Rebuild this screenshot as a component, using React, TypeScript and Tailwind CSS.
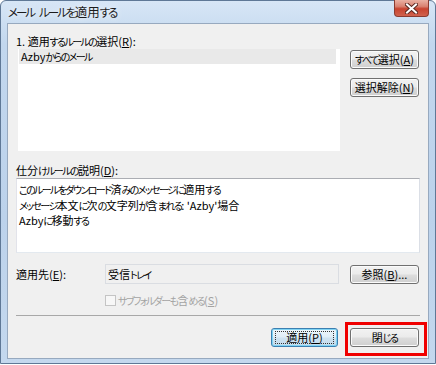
const jp = "font-['Noto_Sans_CJK_JP','Noto_Sans_CJK_SC',sans-serif] [font-feature-settings:'palt'_1]";

// kana runs are set tighter than kanji, like the dialog's UI font
function J({ t, k = "text-[10px] tracking-[-1.6px]" }: { t: string; k?: string }) {
  const parts = t.split(/([\u3040-\u30ff]+)/);
  return (
    <>
      {parts.map((p, i) =>
        i % 2 ? (
          <span key={i} className={k}>
            {p}
          </span>
        ) : (
          p
        )
      )}
    </>
  );
}

function Btn({ label, mn, rest, width }: { label: string; mn: string; rest?: string; width: string }) {
  return (
    <div
      className={`${width} flex h-[19px] items-center justify-center rounded-[3px] border border-[#707070] bg-[linear-gradient(#f2f2f2_0%,#ebebeb_48%,#dddddd_52%,#cfcfcf_100%)] text-[11px] leading-none text-black shadow-[inset_0_0_0_1px_#fbfbfb]`}
    >
      <span>
        <J t={label} />(<u>{mn}</u>){rest}
      </span>
    </div>
  );
}

export default function App() {
  return (
    <div className={`h-[365px] w-[436px] overflow-hidden bg-white ${jp}`}>
      {/* window frame */}
      <div className="flex h-[364px] w-[436px] flex-col rounded-t-[6px] border border-[#5f7896] bg-[linear-gradient(#d7e6f6,#c2d7ee_12%,#bcd2eb_60%,#c4d8ee)] px-[6px] pb-[4px]">
        {/* title bar */}
        <div className="flex h-[22px] items-start justify-between">
          <div className="flex gap-[5px] pl-[1px] pt-[3px] text-[12.5px] leading-[16px] text-[#1b1b1b] [text-shadow:0_0_6px_#ffffff]">
            <span>
              <J t="メール" k="text-[11.5px] tracking-[-2px]" />
            </span>
            <span>
              <J t="ルールを適用する" k="text-[11.5px] tracking-[-2px]" />
            </span>
          </div>
          <div className="-mt-px flex h-[17px] w-[35px] items-center justify-center rounded-b-[4px] border border-t-0 border-[#8a3b30] bg-[linear-gradient(#eab1a3,#d98271_40%,#c8432f_55%,#d0624e_100%)]">
            <svg width="13" height="11" viewBox="0 0 13 11">
              <path d="M2 1.5 L11 9.5 M11 1.5 L2 9.5" stroke="#5c2a22" strokeWidth="4" strokeLinecap="square" />
              <path d="M2 1.5 L11 9.5 M11 1.5 L2 9.5" stroke="#ffffff" strokeWidth="2" strokeLinecap="square" />
            </svg>
          </div>
        </div>

        {/* client area */}
        <div className="flex flex-1 flex-col border border-[#97a9bf] bg-[#f0f0f0] px-[8px] pt-[10px] text-[11px] text-black">
          <div className="h-[14px] leading-[14px]">
            <J t="1. 適用するルールの選択" />(<u>R</u>):
          </div>

          <div className="mt-[1px] flex">
            <div className="ml-[2px] h-[102px] w-[322px] bg-white">
              <div className="ml-[1px] mr-[4px] flex h-[15px] items-center bg-[#e9e9e9] pl-[2px]">
                <span>
                  <J t="Azbyからのメール" />
                </span>
              </div>
            </div>
            <div className="ml-[10px] mt-[1px] flex flex-col gap-[9px]">
              <Btn label="すべて選択" mn="A" width="w-[69px]" />
              <Btn label="選択解除" mn="N" width="w-[69px]" />
            </div>
          </div>

          <div className="mt-[12px] h-[14px] leading-[14px]">
            <J t="仕分けルールの説明" />(<u>D</u>):
          </div>
          <div className="mt-[1px] h-[75px] w-[404px] border border-[#abadb3] border-r-[#dbdfe6] border-b-[#e3e9ef] border-l-[#e2e3ea] bg-white px-[2px] pt-[3px] leading-[15.5px]">
            <div>
              <J t="このルールをダウンロード済みのメッセージに適用する" />
            </div>
            <div>
              <J t="メッセージ本文に次の文字列が含まれる" />: 'Azby'場合
            </div>
            <div>
              <J t="Azbyに移動する" />
            </div>
          </div>

          <div className="mt-[11px] flex items-start">
            <div className="flex h-[20px] w-[89px] items-center">
              <span>
                適用先(<u>E</u>):
              </span>
            </div>
            <div className="flex h-[20px] w-[234px] items-center border border-[#dadde2] pl-[2px]">
              <span>
                <J t="受信トレイ" />
              </span>
            </div>
            <div className="ml-[11px] mt-[1px]">
              <Btn label="参照" mn="B" rest="..." width="w-[69px]" />
            </div>
          </div>

          <div className="ml-[89px] mt-[9px] flex h-[14px] items-center gap-[2px] text-[#a3a3a3]">
            <div className="h-[11px] w-[11px] border border-[#c4c4c4] bg-[#f7f7f7]" />
            <span>
              <J t="サブフォルダーも含める" />(<u>S</u>)
            </span>
          </div>

          <div className="mt-[8px] h-px w-[404px] bg-[#a8a8a8]" />

          <div className="mt-[12px] flex justify-end gap-[12px] pr-[1px]">
            <div className="flex h-[19px] w-[67px] items-center justify-center rounded-[3px] border border-[#3c7fb1] bg-[linear-gradient(#eef6fb_0%,#e0eef7_48%,#cfe3f1_52%,#c3dbec_100%)] shadow-[inset_0_0_0_1px_#7fd4f4]">
              <div className="flex h-[13px] w-[59px] items-center justify-center border border-dotted border-[#333333] leading-none">
                <span>
                  適用(<u>P</u>)
                </span>
              </div>
            </div>
            <div className="relative">
              <div className="flex h-[19px] w-[69px] items-center justify-center rounded-[3px] border border-[#707070] bg-[linear-gradient(#f2f2f2_0%,#ebebeb_48%,#dddddd_52%,#cfcfcf_100%)] leading-none shadow-[inset_0_0_0_1px_#fbfbfb]">
                <span>
                  閉<J t="じる" />
                </span>
              </div>
              <div className="pointer-events-none absolute -bottom-[9px] -left-[5px] -right-[8px] -top-[6px] border-[3px] border-[#f00000]" />
            </div>
          </div>
        </div>
      </div>
    </div>
  );
}
